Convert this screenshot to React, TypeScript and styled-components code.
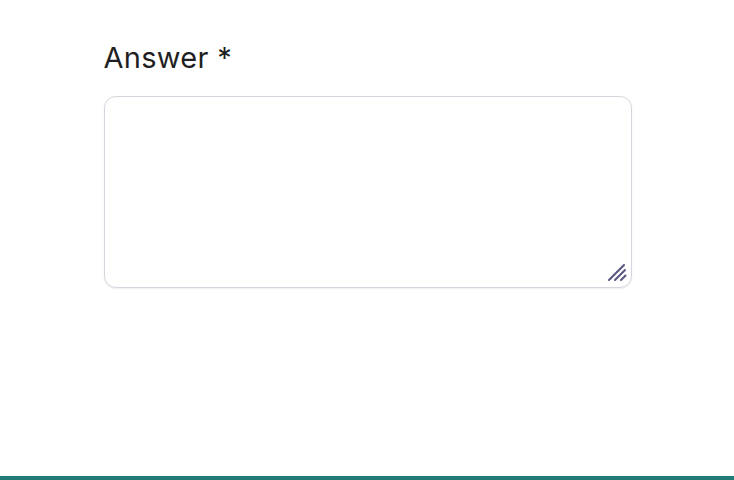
import React from "react";
import styled, { createGlobalStyle } from "styled-components";

const Global = createGlobalStyle`
  html, body { margin: 0; padding: 0; background: #fff; }
  body { font-family: Inter, "Open Sans", sans-serif; }
`;

const Page = styled.div`
  min-height: 100vh;
  display: flex;
  flex-direction: column;
`;

const Form = styled.div`
  width: 528px;
  margin: 0 auto;
  padding: 38px 0 0 1px;
  display: flex;
  flex-direction: column;
  gap: 18px;
`;

const Label = styled.label`
  font-size: 29px;
  line-height: 40px;
  color: #1f1f23;
  font-weight: 400;
  letter-spacing: 0.3px;
`;

const Field = styled.div`
  position: relative;
  width: 528px;
  height: 192px;
`;

const Answer = styled.textarea`
  box-sizing: border-box;
  display: block;
  width: 100%;
  height: 100%;
  border: 1px solid #d6d5de;
  border-radius: 12px;
  box-shadow: 0 1px 2px rgba(20, 20, 40, 0.07);
  padding: 12px 14px;
  font-family: Inter, sans-serif;
  font-size: 16px;
  resize: none;
  outline: none;
`;

const Grip = styled.svg`
  position: absolute;
  right: 5px;
  bottom: 6px;
  pointer-events: none;
`;

const Bar = styled.div`
  margin-top: auto;
  height: 4px;
  background: #227a74;
`;

export default function App() {
  return (
    <Page>
      <Global />
      <Form>
        <Label htmlFor="answer">Answer *</Label>
        <Field>
          <Answer id="answer" />
          <Grip width="20" height="19" viewBox="0 0 20 19">
            <g stroke="#565680" strokeWidth="2" strokeLinecap="round">
              <line x1="2" y1="17" x2="17" y2="2" />
              <line x1="8" y1="17" x2="18" y2="7" />
              <line x1="14" y1="17" x2="18.5" y2="12.5" />
            </g>
          </Grip>
        </Field>
      </Form>
      <Bar />
    </Page>
  );
}
